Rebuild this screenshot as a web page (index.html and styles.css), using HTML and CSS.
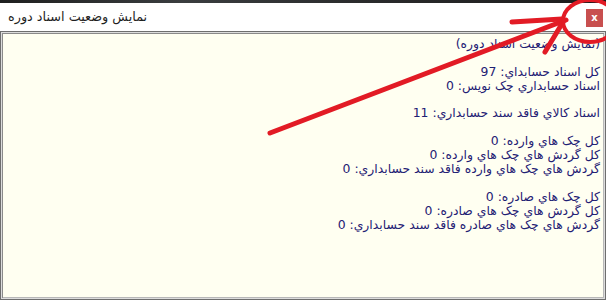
FILE: index.html
```html
<!DOCTYPE html>
<html lang="fa">
<head>
<meta charset="utf-8">
<link rel="stylesheet" href="styles.css">
</head>
<body>
<div class="window">
  <div class="topstrip"></div>
  <div class="titlebar">
    <span class="title" dir="rtl">نمایش وضعیت اسناد دوره</span>
    <span class="close">x</span>
  </div>
  <div class="content" dir="rtl">
    <div class="line">(نمایش وضعیت اسناد دوره)</div>
    <div class="gap"></div>
    <div class="line">کل اسناد حسابداي: 97</div>
    <div class="line">اسناد حسابداري چک نويس: 0</div>
    <div class="gap"></div>
    <div class="line">اسناد کالاي فاقد سند حسابداري: 11</div>
    <div class="gap"></div>
    <div class="line">کل چک هاي وارده: 0</div>
    <div class="line">کل گردش هاي چک هاي وارده: 0</div>
    <div class="line">گردش هاي چک هاي وارده فاقد سند حسابداري: 0</div>
    <div class="gap"></div>
    <div class="line">کل چک هاي صادره: 0</div>
    <div class="line">کل گردش هاي چک هاي صادره: 0</div>
    <div class="line">گردش هاي چک هاي صادره فاقد سند حسابداري: 0</div>
  </div>
  <svg class="annot" width="606" height="300" viewBox="0 0 606 300">
    <g fill="none" stroke="#e21b25" stroke-linecap="round">
      <line x1="270" y1="133" x2="566" y2="20" stroke-width="5"/>
      <line x1="512" y1="22" x2="562" y2="19" stroke-width="5"/>
      <line x1="563" y1="22" x2="545" y2="52" stroke-width="5"/>
      <ellipse cx="590" cy="21" rx="27" ry="21" stroke-width="4"/>
    </g>
  </svg>
</div>
</body>
</html>
```

FILE: styles.css
```css
html, body {
  margin: 0;
  padding: 0;
  background: #ffffff;
}

.window {
  position: relative;
  width: 606px;
  height: 300px;
  overflow: hidden;
  display: flex;
  flex-direction: column;
  background: #ffffff;
}

.topstrip {
  height: 3px;
  background: linear-gradient(90deg, #1e1f1f, #3a3d3f 30%, #2a2b2c 60%, #1c1c1c);
  flex: none;
}

.titlebar {
  height: 28px;
  flex: none;
  display: flex;
  align-items: flex-start;
  justify-content: space-between;
  background: #ffffff;
  padding: 0 3px 0 8px;
}

.title {
  font-family: "DejaVu Sans", sans-serif;
  font-size: 12.8px;
  color: #1f1f1f;
  margin-top: 6px;
  line-height: 16px;
}

.close {
  width: 17px;
  height: 18px;
  margin-top: 6px;
  background: #c84f4f;
  color: #ffffff;
  font-family: "DejaVu Sans", sans-serif;
  font-size: 10px;
  font-weight: bold;
  display: flex;
  align-items: center;
  justify-content: center;
  line-height: 1;
}

.content {
  flex: 1;
  background: #fffff1;
  border: 1px solid #6e6e6e;
  box-shadow: inset 1px 1px 0 #dcdcdc, inset -1px -1px 0 #dcdcdc, inset 2px 2px 0 #8a8a8a, inset -2px -2px 0 #b8b8b8;
  padding: 5px 5px 0 0;
  font-family: "DejaVu Sans", sans-serif;
  font-size: 12.4px;
  color: #1f2174;
  text-align: right;
}

.line {
  height: 13.9px;
  line-height: 13.9px;
  white-space: nowrap;
}

.gap {
  height: 13.9px;
}

.annot {
  position: absolute;
  left: 0;
  top: 0;
  pointer-events: none;
}
```
